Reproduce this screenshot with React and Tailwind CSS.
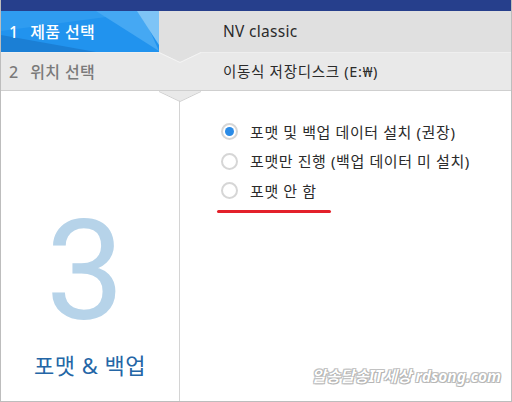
import React from 'react';

const font = { fontFamily: '"Noto Sans", "Noto Sans CJK KR", sans-serif' };

function Radio({ checked, label }) {
    return (
        <div className="flex items-center h-[29.5px]">
            <span className="w-[17px] h-[17px] rounded-full border-2 border-[#d6d6d6] bg-white flex items-center justify-center">
                {checked && <span className="w-[9px] h-[9px] rounded-full bg-[#2b8be6]" />}
            </span>
            <span className="ml-[12px] text-[15px] text-[#2b2b2b] tracking-[0.6px]">{label}</span>
        </div>
    );
}

export default function App() {
    return (
        <div style={font} className="relative w-[512px] h-[402px] overflow-hidden bg-white flex flex-col border-x border-b border-[#bdbdbd]">
            <div className="h-[11px] bg-[#263f8c] shrink-0" />

            {/* step rows */}
            <div className="flex h-[41px] shrink-0">
                <div className="relative w-[158px] flex items-center pl-[8px] text-white text-[16px] font-medium">
                    <svg className="absolute inset-0" width="158" height="41" viewBox="0 0 158 41">
                        <rect width="158" height="41" fill="#2193ee" />
                        <polygon points="0,0 150,0 0,20" fill="#2f9cf0" />
                        <polygon points="95,0 140,0 158,40 " fill="#45a8f3" />
                        <polygon points="136,0 158,0 158,34" fill="#7ec4f6" />
                        <polygon points="0,24 95,41 0,41" fill="#1b7fd5" />
                    </svg>
                    <span className="relative">1</span>
                    <span className="relative ml-[12px] tracking-[0.4px]">제품 선택</span>
                </div>
                <div className="flex-1 bg-[#e0e0e0] flex items-center pl-[64px] text-[15.5px] text-[#2b2b2b] tracking-[0.3px]">NV classic</div>
            </div>
            <div className="relative flex h-[39px] shrink-0 bg-[#e9e9e9] border-b border-[#cfcfcf] border-t border-t-[#efefef]">
                <div className="w-[158px] flex items-center pl-[8px] text-[#7a7a7a] text-[16px] font-medium">
                    <span>2</span>
                    <span className="ml-[12px] tracking-[0.4px]">위치 선택</span>
                </div>
                <div className="flex-1 flex items-center pl-[64px] text-[14.5px] text-[#2b2b2b] tracking-[0.7px]">이동식 저장디스크 (E:₩)</div>
                <svg className="absolute left-[158px] -top-[1px]" width="42" height="11" viewBox="0 0 42 11">
                    <polygon points="0,0 42,0 21,10" fill="#e0e0e0" />
                    <polyline points="0,0.5 21,10.5 42,0.5" fill="none" stroke="#f4f4f4" strokeWidth="1" />
                </svg>
                <svg className="absolute left-[158px] top-[38px]" width="42" height="12" viewBox="0 0 42 12">
                    <polygon points="0,0 42,0 21,10" fill="#e9e9e9" />
                    <polyline points="0,0.5 21,10.5 42,0.5" fill="none" stroke="#d0d0d0" strokeWidth="1" />
                </svg>
            </div>

            {/* body */}
            <div className="flex flex-1">
                <div className="w-[179px] border-r border-[#d4d4d4] flex flex-col items-center pt-[130px] pr-[10px]">
                    <div className="text-[140px] leading-[100px] font-normal text-[#b6d3e9]" style={{ fontFamily: 'Roboto, "Noto Sans", sans-serif' }}>3</div>
                    <div className="mt-[28px] pl-[10px] text-[22px] text-[#2466a6] tracking-[0.5px]">포맷 &amp; 백업</div>
                </div>
                <div className="flex-1 pl-[41px] pt-[26px] relative">
                    <Radio checked label="포맷 및 백업 데이터 설치 (권장)" />
                    <Radio label="포맷만 진행 (백업 데이터 미 설치)" />
                    <Radio label="포맷 안 함" />
                    <div className="ml-[-4px] mt-[4px] w-[114px] h-[3px] rounded-full bg-[#e3202a]" />
                    <div
                        className="absolute right-[10px] bottom-[13px] text-[15.5px] font-bold italic text-white"
                        style={{ textShadow: '0 0 1px #888, 1px 1px 0 #bbb, -1px -1px 0 #c8c8c8, 1px -1px 0 #c8c8c8, -1px 1px 0 #c8c8c8' }}
                    >
                        알송달송IT세상 rdsong.com
                    </div>
                </div>
            </div>
        </div>
    );
}
